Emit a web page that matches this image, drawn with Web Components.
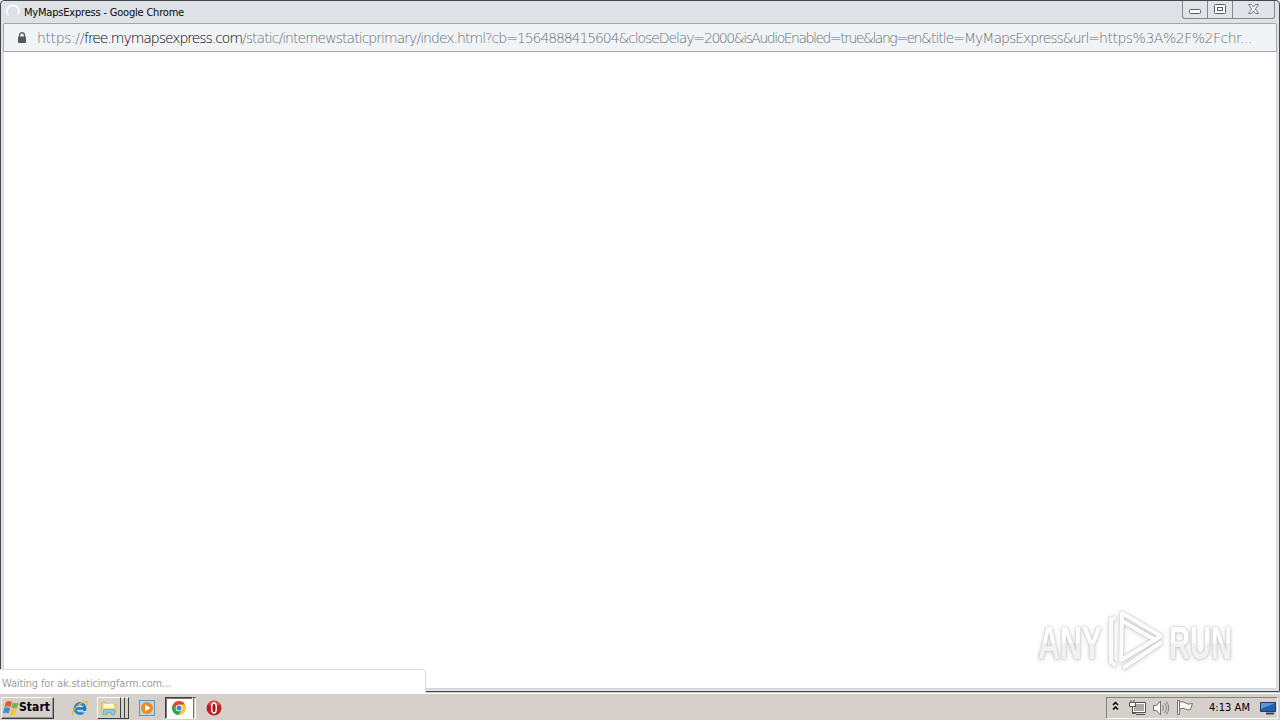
<!DOCTYPE html>
<html lang="en">
<head>
<meta charset="utf-8">
<title>MyMapsExpress - Google Chrome</title>
<style>
  html, body {
    margin: 0;
    width: 1280px;
    height: 720px;
    overflow: hidden;
    background: #fff;
  }
</style>
</head>
<body>
<desktop-screen></desktop-screen>
<script>
const define = (name, html, setup) => {
  const template = document.createElement('template');
  template.innerHTML = html;

  customElements.define(name, class extends HTMLElement {
    constructor() {
      super();
      this.attachShadow({ mode: 'open' });
      this.shadowRoot.append(template.content.cloneNode(true));
    }

    connectedCallback() {
      if (setup) {
        setup(this);
      }
    }
  });
};

// Spreads its text evenly over the number of pixels in the width attribute.
define('fit-text', `
<style>
  :host { display: block; flex: none; }
  span { display: inline-block; white-space: pre; vertical-align: top; }
</style>
<span><slot></slot></span>`, el => {
  const span = el.shadowRoot.querySelector('span');
  const target = Number(el.getAttribute('width'));
  el.style.width = `${target}px`;
  const natural = span.getBoundingClientRect().width;
  span.style.letterSpacing = `${(target - natural) / el.textContent.length}px`;
});

define('window-controls', `
<style>
  :host {
    display: flex;
    box-sizing: border-box;
    width: 93px;
    height: 18px;
    margin-right: 2px;
    border: 1px solid #85878b;
    border-top: 0;
    border-radius: 0 0 3px 3px;
    background: #e0e3ea;
  }
  svg { display: block; flex: none; }
  svg + svg { border-left: 1px solid #85878b; }
</style>
<svg width="24" height="17" fill="#f8f9fb" stroke="#5c5e62"><rect x="6.500" y="8.500" width="11" height="4" rx="1"/></svg>
<svg width="24" height="17" fill="#f8f9fb" stroke="#5c5e62"><rect x="6.500" y="3.500" width="11" height="9" rx="1"/><rect x="9.500" y="6.500" width="5" height="3"/></svg>
<svg width="41" height="17" fill="#f8f9fb" stroke="#77797d"><path d="M15.500 3.500h3l2 2.500 2-2.500h3l-3.200 4.500 3.200 4.500h-3l-2-2.500-2 2.500h-3l3.200-4.500z"/></svg>`);

define('title-bar', `
<style>
  :host {
    display: flex;
    align-items: flex-start;
    height: 22px;
    background: #dee1e8;
    font: 11px/23px "DejaVu Sans Condensed", "DejaVu Sans", sans-serif;
    font-stretch: condensed;
    color: #08090b;
  }
  .spinner { margin: 2px 3px 0 2px; flex: none; }
  window-controls { margin-left: auto; }
</style>
<svg class="spinner" width="16" height="16" fill="none" stroke="#f9fafc" stroke-width="2"><path d="M3.500 12.500A6 6 0 1 1 13 11.500"/></svg>
<slot></slot>
<window-controls></window-controls>`);

define('address-bar', `
<style>
  :host {
    display: flex;
    align-items: center;
    box-sizing: border-box;
    height: 29px;
    border: 1px solid #a4a7aa;
    border-radius: 2px 2px 0 0;
    background: #f1f4f7;
    font: 14px/27px "DejaVu Sans", sans-serif;
    font-weight: 200;
    color: #6c7074;
  }
  svg { flex: none; margin: 0 10px 0 13px; }
  ::slotted(fit-text) { padding-top: 2px; }
</style>
<svg width="10" height="12"><path d="M2.500 5V3.300a2.500 2.500 0 0 1 5 0V5" fill="none" stroke="#5f6368" stroke-width="1.400"/><rect x="1" y="4.500" width="8" height="6.500" rx=".7" fill="#55585d"/></svg>
<slot></slot>`);

define('browser-window', `
<style>
  :host {
    display: flex;
    flex-direction: column;
    box-sizing: border-box;
    width: 1280px;
    height: 692px;
    padding: 0 2px 2px;
    border: 1px solid #45474c;
    border-radius: 4px 4px 0 0;
    background: #dee1e8;
  }
  main { flex: 1; background: #fff; border: 1px solid #d2d4d8; border-top: 0; }
</style>
<slot></slot>
<main></main>`);

define('status-bubble', `
<style>
  :host {
    position: absolute;
    left: 0;
    top: 669px;
    box-sizing: border-box;
    width: 426px;
    height: 24px;
    padding: 3px 0 0 2px;
    border: 1px solid #dcdcdc;
    border-left: 0;
    border-bottom: 0;
    border-radius: 0 4px 0 0;
    background: #fff;
    font: 11px/21px "DejaVu Sans Condensed", "DejaVu Sans", sans-serif;
    font-stretch: condensed;
    color: #a0a0a0;
  }
</style>
<slot></slot>`);

define('run-watermark', `
<style>
  :host { position: absolute; left: 1030px; top: 604px; }
  svg { display: block; filter: drop-shadow(0 0 1px #bbb) drop-shadow(0 1px 2px #ddd); }
  text { font: bold 46px "Liberation Sans Narrow", "Liberation Sans", sans-serif; }
</style>
<svg width="245" height="74">
  <defs>
    <linearGradient id="fade" gradientUnits="userSpaceOnUse" x1="0" y1="22" x2="0" y2="56">
      <stop offset=".5" stop-color="#fff"/><stop offset=".5" stop-color="#f1f1f1"/>
    </linearGradient>
  </defs>
  <g fill="url(#fade)">
    <text x="8" y="55" textLength="64" lengthAdjust="spacingAndGlyphs">ANY</text>
    <text x="139" y="55" textLength="63" lengthAdjust="spacingAndGlyphs">RUN</text>
  </g>
  <g fill="none" stroke="#fcfcfc" stroke-width="4" stroke-linejoin="round">
    <path d="M86 14l-5 1v43l5 3"/>
    <path d="M92 9l39 23-40 24z"/>
    <path d="M92 17l35 20M132 38L93 64"/>
  </g>
</svg>`);

define('start-button', `
<style>
  :host {
    display: flex;
    align-items: center;
    box-sizing: border-box;
    width: 53px;
    height: 22px;
    padding-left: 1px;
    border: 1px solid;
    border-color: #fff #404040 #404040 #fff;
    box-shadow: inset -1px -1px #96928c;
    background: #d5d0c9;
    font: bold 12px/19px "DejaVu Sans Condensed", "DejaVu Sans", sans-serif;
    font-stretch: condensed;
    color: #000;
  }
  svg { flex: none; }
</style>
<svg width="16" height="16"><path d="M3 2q3-2 6 0L7.500 7Q5 5.500 1.500 7z" fill="#e65b27"/><path d="M9.700 2.500q3 1.500 6 0L14 8q-3 1-5.500-.5z" fill="#79b83c"/><path d="M1.200 8q3-1.500 6 0l-1.500 5.500q-3-1.500-5.700 0z" fill="#3b8fd4"/><path d="M8.200 8.300q3 1.500 5.500.5L12 14.500q-3 1.500-5.300-.5z" fill="#f7c52c"/></svg>
<slot></slot>`);

define('quick-launch', `
<style>
  :host { display: flex; align-items: center; height: 24px; }
  svg { display: block; flex: none; }
  .ie { margin-left: 18px; }
  .group { display: flex; height: 22px; margin-left: 9px; }
  .face {
    display: flex;
    align-items: center;
    justify-content: center;
    box-sizing: border-box;
    width: 24px;
    border: 1px solid;
    border-color: #fff #404040 #404040 #fff;
    background: #d5d0c9;
  }
  .stack { box-sizing: border-box; width: 4px; border-right: 1px solid #404040; border-top: 1px solid #fff; border-bottom: 1px solid #404040; }
  .pressed { width: 28px; border-color: #404040 #fff #fff #404040; box-shadow: inset 1px 1px #77736e; background: #fff; }
  .pressed + .stack { width: 3px; border-color: #404040 #fff #fff; border-left: 1px solid #77736e; }
  .media { margin-left: 10px; }
  .group.chrome { margin-left: 10px; }
  .opera { margin-left: 10px; }
</style>
<svg class="ie" width="16" height="16"><circle cx="8" cy="8.500" r="5" fill="none" stroke="#2589d0" stroke-width="3"/><path d="M4 8.500h10" stroke="#1b76c0" stroke-width="2.500"/><path d="M10 11h5v1.500h-5z" fill="#d5d0c9"/><path d="M1 15Q-1 12 5 6.500T15 1.500q1 1-1 4" fill="none" stroke="#e5b83c" stroke-width="1.300"/></svg>
<div class="group"><div class="face">
  <svg width="18" height="16"><path d="M1.500 14V2.500h5l1.500 2h8V14z" fill="#f5dc83" stroke="#d4b869"/><path d="M4 4h10v4H4z" fill="#fff8c9"/><path d="M3.500 15V9.500h11V15h-3v-2.500h-5V15z" fill="#87c9e8" stroke="#6fb2cc"/></svg>
</div><div class="stack"></div><div class="stack"></div></div>
<svg class="media" width="16" height="16"><rect x=".5" y=".5" width="15" height="15" fill="#b9d8ed" stroke="#5b98ca"/><circle cx="8" cy="8" r="6" fill="#ef8b1c"/><path d="M6 4.500v7l5.500-3.500z" fill="#fff"/></svg>
<div class="group chrome"><div class="face pressed">
  <svg width="14" height="14"><circle cx="7" cy="7" r="7" fill="#f9cc37"/><path d="M.9 3.500A7 7 0 0 1 13.100 3.500H7L4 9z" fill="#df4935"/><path d="M.9 3.500A7 7 0 0 0 6.500 14L10 8.800 4 9z" fill="#32a35a"/><circle cx="7" cy="7" r="3.300" fill="#fff"/><circle cx="7" cy="7" r="2.500" fill="#4082de"/></svg>
</div><div class="stack"></div></div>
<svg class="opera" width="16" height="16"><circle cx="8" cy="8" r="7.500" fill="#c22026"/><path d="M2 4a7 6 0 0 1 12 0q-6 4-12 0" fill="#dd5656"/><ellipse cx="8" cy="8" rx="2.300" ry="5" fill="#a0141a" stroke="#fff" stroke-width="1.500"/></svg>`);

define('system-tray', `
<style>
  :host {
    display: flex;
    align-items: center;
    box-sizing: border-box;
    width: 172px;
    height: 22px;
    margin-left: auto;
    border: 1px solid;
    border-color: #85817b #fff #fff #85817b;
    font: 11px/20px "DejaVu Sans Condensed", "DejaVu Sans", sans-serif;
    font-stretch: condensed;
    color: #000;
  }
  svg { display: block; flex: none; }
  .screen { margin-left: 10px; }
</style>
<svg width="102" height="20" fill="none">
  <path d="M6 7l2.500-2.500L11 7M6 11.500L8.500 9l2.500 2.500" stroke="#000" stroke-width="1.500"/>
  <rect x="26.500" y="5.500" width="11" height="8" fill="#aaa9a6" stroke="#fff"/><path d="M29 4.500h9.500v10H25.500M29 16.500h9" stroke="#55524e"/>
  <path d="M22.500 4.500h6v4h-6z" fill="#fff" stroke="#55524e"/><path d="M24 2v2.500M27 2v2.500M25.500 8.500v7h3" stroke="#55524e"/>
  <path d="M46.500 7.500h3L53.500 3v14l-4-4.500h-3z" fill="#f8f8f8" stroke="#77746f"/>
  <path d="M55.500 7q2 3 0 6M57.500 5q4 5 0 10M59.500 3.500q4.500 6.500 0 13" stroke="#85827e"/>
  <path d="M70.500 2.500h2v14h-2zM72.500 4q4-1 6 1t7 .5l-2 6q-3 1-5-.5t-6 0z" fill="#f7f7f5" stroke="#77746f"/>
</svg>
<slot></slot>
<svg class="screen" width="16" height="14"><path d="M.5 1.500h15v9H.5z" fill="#235fae" stroke="#16427c"/><path d="M1 2h14L1 8z" fill="#5698d7"/><path d="M6 12.500h8" stroke="#33475e" stroke-width="2"/></svg>`);

define('task-bar', `
<style>
  :host {
    display: flex;
    align-items: center;
    box-sizing: border-box;
    height: 28px;
    padding: 2px 2px 0 1px;
    border-top: 1px solid #d5d0c9;
    box-shadow: inset 0 1px #fff;
    background: #d5d0c9;
  }
</style>
<slot></slot>`);

define('desktop-screen', `
<style>
  :host { display: flex; flex-direction: column; width: 1280px; height: 720px; background: #fff; }
  .domain { color: #000; }
</style>
<browser-window>
  <title-bar><fit-text width="160">MyMapsExpress - Google Chrome</fit-text></title-bar>
  <address-bar>
    <fit-text width="47">https://</fit-text>
    <fit-text class="domain" width="158">free.mymapsexpress.com</fit-text>
    <fit-text width="275">/static/internewstaticprimary/index.html?cb=</fit-text>
    <fit-text width="187">1564888415604&amp;closeDelay=</fit-text>
    <fit-text width="217">2000&amp;isAudioEnabled=true&amp;lang=en</fit-text>
    <fit-text width="178">&amp;title=MyMapsExpress&amp;url=</fit-text>
    <fit-text width="153">https%3A%2F%2Fchr...</fit-text>
  </address-bar>
</browser-window>
<task-bar>
  <start-button><fit-text width="31">Start</fit-text></start-button>
  <quick-launch></quick-launch>
  <system-tray><fit-text width="41">4:13 AM</fit-text></system-tray>
</task-bar>
<status-bubble><fit-text width="169">Waiting for ak.staticimgfarm.com...</fit-text></status-bubble>
<run-watermark></run-watermark>`);
</script>
</body>
</html>
